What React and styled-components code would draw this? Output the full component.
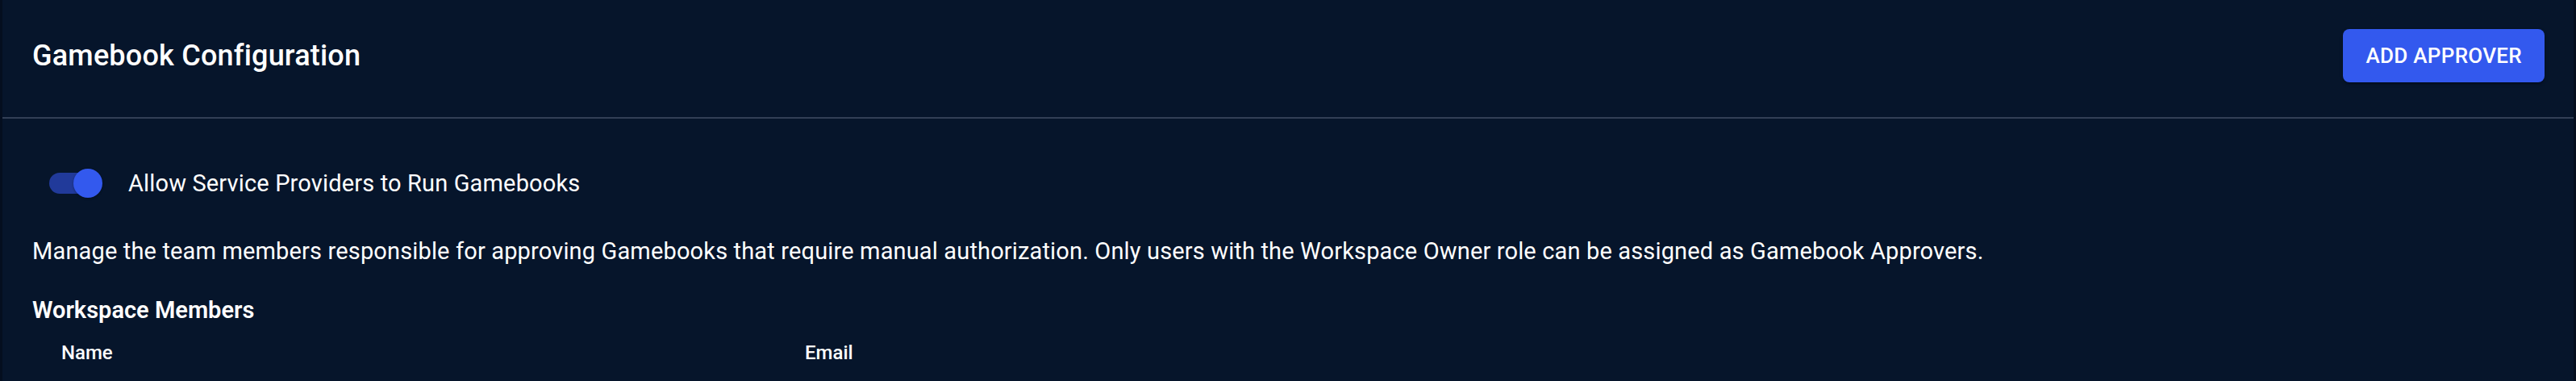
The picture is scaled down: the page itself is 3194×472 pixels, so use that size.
import React from "react";
import styled, { createGlobalStyle } from "styled-components";

const Global = createGlobalStyle`
  html, body { margin: 0; padding: 0; background: #06152b; }
  body { font-family: Roboto, "Noto Sans", Arial, sans-serif; color: #ffffff; }
  * { box-sizing: border-box; }
`;

const Panel = styled.section`
  width: 3194px;
  height: 472px;
  background: #06152b;
  border-left: 3px solid #040e1f;
  border-right: 3px solid #040e1f;
  overflow: hidden;
`;

const Header = styled.header`
  height: 147px;
  display: flex;
  align-items: center;
  justify-content: space-between;
  padding: 0 36px 7px 37px;
  border-bottom: 2px solid #323f56;
`;

const Title = styled.h1`
  margin: 0;
  font-size: 36px;
  font-weight: 500;
  letter-spacing: 0.2px;
  color: #ffffff;
`;

const PrimaryButton = styled.button`
  height: 66px;
  padding: 0 28px;
  border: none;
  border-radius: 8px;
  background: #3359ee;
  color: #ffffff;
  font-family: Roboto, Arial, sans-serif;
  font-size: 26px;
  font-weight: 500;
  letter-spacing: 0.3px;
  text-transform: uppercase;
  box-shadow: 0 3px 2px -2px rgba(0, 0, 0, 0.4), 0 2px 4px rgba(0, 0, 0, 0.25);
  cursor: pointer;
`;

const Body = styled.div`
  padding: 0 36px 0 37px;
`;

const ToggleRow = styled.label`
  display: flex;
  align-items: center;
  gap: 32px;
  margin-top: 61px;
  padding-left: 21px;
  height: 38px;
`;

const SwitchBox = styled.span`
  position: relative;
  width: 66px;
  height: 36px;
  flex: none;
`;

const Track = styled.span`
  position: absolute;
  left: 0;
  top: 5px;
  width: 60px;
  height: 26px;
  border-radius: 13px;
  background: ${(p) => (p.$on ? "#213a9a" : "#3a4456")};
`;

const Thumb = styled.span`
  position: absolute;
  top: 0;
  left: ${(p) => (p.$on ? "30px" : "0")};
  width: 36px;
  height: 36px;
  border-radius: 50%;
  background: ${(p) => (p.$on ? "#3359ee" : "#c9cdd6")};
  box-shadow: 0 1px 3px rgba(0, 0, 0, 0.3);
`;

const ToggleLabel = styled.span`
  font-size: 29px;
  font-weight: 400;
  letter-spacing: 0.15px;
  color: #ffffff;
`;

const Description = styled.p`
  margin: 45px 0 0 0;
  font-size: 29px;
  line-height: 40px;
  font-weight: 400;
  letter-spacing: 0.15px;
  color: #ffffff;
`;

const SectionTitle = styled.h2`
  margin: 33px 0 0 0;
  font-size: 29px;
  line-height: 40px;
  font-weight: 600;
  color: #ffffff;
`;

const TableHead = styled.div`
  display: grid;
  grid-template-columns: 922px 1fr;
  margin-top: 13px;
`;

const HeadCell = styled.div`
  padding: 0 36px;
  font-size: 24px;
  line-height: 40px;
  font-weight: 500;
  color: #ffffff;
`;

export default function App() {
  const on = true;
  return (
    <>
      <Global />
      <Panel>
        <Header>
          <Title>Gamebook Configuration</Title>
          <PrimaryButton>Add Approver</PrimaryButton>
        </Header>
        <Body>
          <ToggleRow>
            <SwitchBox>
              <Track $on={on} />
              <Thumb $on={on} />
            </SwitchBox>
            <ToggleLabel>Allow Service Providers to Run Gamebooks</ToggleLabel>
          </ToggleRow>
          <Description>
            Manage the team members responsible for approving Gamebooks that require manual authorization. Only users with the Workspace Owner role can be assigned as Gamebook Approvers.
          </Description>
          <SectionTitle>Workspace Members</SectionTitle>
          <TableHead>
            <HeadCell>Name</HeadCell>
            <HeadCell>Email</HeadCell>
          </TableHead>
        </Body>
      </Panel>
    </>
  );
}
